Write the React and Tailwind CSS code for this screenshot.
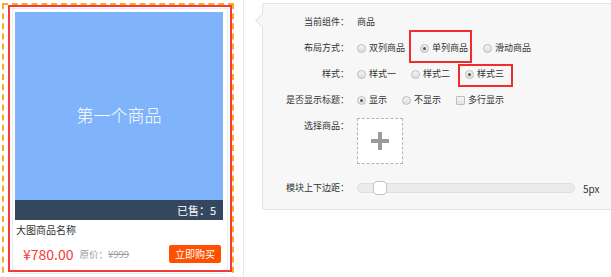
import React from "react";

const Radio = ({ checked, label }) => (
    <label className="flex items-center">
        <span className="w-[9px] h-[9px] rounded-full border border-[#bdbdbd] bg-gradient-to-b from-[#f4f4f4] to-[#dedede] flex items-center justify-center">
            {checked && <span className="w-[3px] h-[3px] rounded-full bg-[#555]" />}
        </span>
        <span className="ml-[3px]">{label}</span>
    </label>
);

const Checkbox = ({ label }) => (
    <label className="flex items-center">
        <span className="w-[9px] h-[9px] rounded-[1px] border border-[#bdbdbd] bg-gradient-to-b from-[#f7f7f7] to-[#e2e2e2]" />
        <span className="ml-[3px]">{label}</span>
    </label>
);

const Row = ({ label, children }) => (
    <div className="flex items-center h-[26px]">
        <div className="w-[86px] text-right">{label}</div>
        <div className="ml-[8px] flex items-center gap-x-[15px]">{children}</div>
    </div>
);

const App = () => {
    return (
        <div
            className="relative w-[611px] h-[277px] bg-white flex overflow-hidden text-[#333]"
            style={{ fontFamily: '"Noto Sans CJK SC", "Noto Sans", sans-serif' }}
        >
            {/* Preview column */}
            <div className="w-[243px] shrink-0">
                <div className="ml-[2px] mt-[3px] w-[232px] h-[290px] border-2 border-dashed border-[#ffa91f] pl-[4px]">
                    <div className="w-[224px] h-[267px] border-2 border-[#f43a3a] overflow-hidden">
                        <div className="mx-[2px] mt-[1px] border border-[#ececec] border-b-0 px-[2px] pt-[3px] h-[300px]">
                            <div className="relative w-[208px] h-[208px] bg-[#80b4fa] flex items-center justify-center">
                                <span className="text-white text-[17px] font-light leading-none -mt-[4px]">第一个商品</span>
                                <div className="absolute left-0 right-0 bottom-0 h-[20px] bg-[#33475f] flex items-center justify-end pr-[7px] text-white text-[11px]">
                                    已售：5
                                </div>
                            </div>
                            <div className="mt-[4px] pl-[1px] text-[10px] leading-[12px] text-[#333]">大图商品名称</div>
                            <div className="mt-[9px] flex items-center pl-[8px] pr-[4px]">
                                <span className="text-[14px] leading-none text-[#f43a3a]">¥780.00</span>
                                <span className="ml-[6px] text-[9.5px] text-[#9a9a9a]">
                                    原价：<span className="line-through">¥999</span>
                                </span>
                                <button className="ml-auto w-[52px] h-[18px] rounded-[2px] bg-[#ff5000] text-white text-[10px] leading-none">
                                    立即购买
                                </button>
                            </div>
                        </div>
                    </div>
                    <div className="ml-[4px] mt-[1px] w-[214px] border-t border-[#ececec]" />
                </div>
            </div>

            {/* Divider */}
            <div className="w-px h-full bg-[#e8e8e8] shrink-0" />

            {/* Settings panel */}
            <div className="ml-[18px] mt-[3px] relative">
                <div className="absolute left-[-5px] top-[13px] w-[9px] h-[9px] rotate-45 bg-[#f7f7f7] border-l border-b border-[#e3e3e3]" />
                <div className="w-[360px] h-[207px] bg-[#f7f7f7] border border-r-0 border-[#e3e3e3] rounded-l-[3px] pt-[5px] text-[9px]">
                    <Row label="当前组件：">
                        <span>商品</span>
                    </Row>
                    <Row label="布局方式：">
                        <Radio label="双列商品" />
                        <Radio checked label="单列商品" />
                        <Radio label="滑动商品" />
                    </Row>
                    <Row label="样式：">
                        <Radio label="样式一" />
                        <Radio label="样式二" />
                        <Radio checked label="样式三" />
                    </Row>
                    <Row label="是否显示标题：">
                        <Radio checked label="显示" />
                        <Radio label="不显示" />
                        <Checkbox label="多行显示" />
                    </Row>
                    <div className="flex mt-[5px]">
                        <div className="w-[86px] text-right leading-[16px]">选择商品：</div>
                        <div className="ml-[8px] w-[46px] h-[46px] border border-dashed border-[#b5b5b5] bg-white flex items-center justify-center">
                            <svg width="18" height="18" viewBox="0 0 18 18">
                                <rect x="7" y="0" width="4" height="18" fill="#9a9a9a" />
                                <rect x="0" y="7" width="18" height="4" fill="#9a9a9a" />
                            </svg>
                        </div>
                    </div>
                    <div className="flex items-center h-[20px] mt-[14px]">
                        <div className="w-[86px] text-right">模块上下边距：</div>
                        <div className="ml-[8px] relative w-[218px] h-[10px] rounded-full bg-[#ebebeb] border border-[#dedede]">
                            <div className="absolute left-[15px] top-[-3px] w-[14px] h-[14px] rounded-[4px] bg-white border border-[#c4c4c4]" />
                        </div>
                        <span className="ml-[8px] text-[10px]">5px</span>
                    </div>
                </div>
            </div>

            {/* Annotation boxes */}
            <div className="absolute left-[409px] top-[30px] w-[63px] h-[33px] border-2 border-[#f02d2d]" />
            <div className="absolute left-[458px] top-[64px] w-[55px] h-[23px] border-2 border-[#f02d2d]" />
        </div>
    );
};

export default App;
